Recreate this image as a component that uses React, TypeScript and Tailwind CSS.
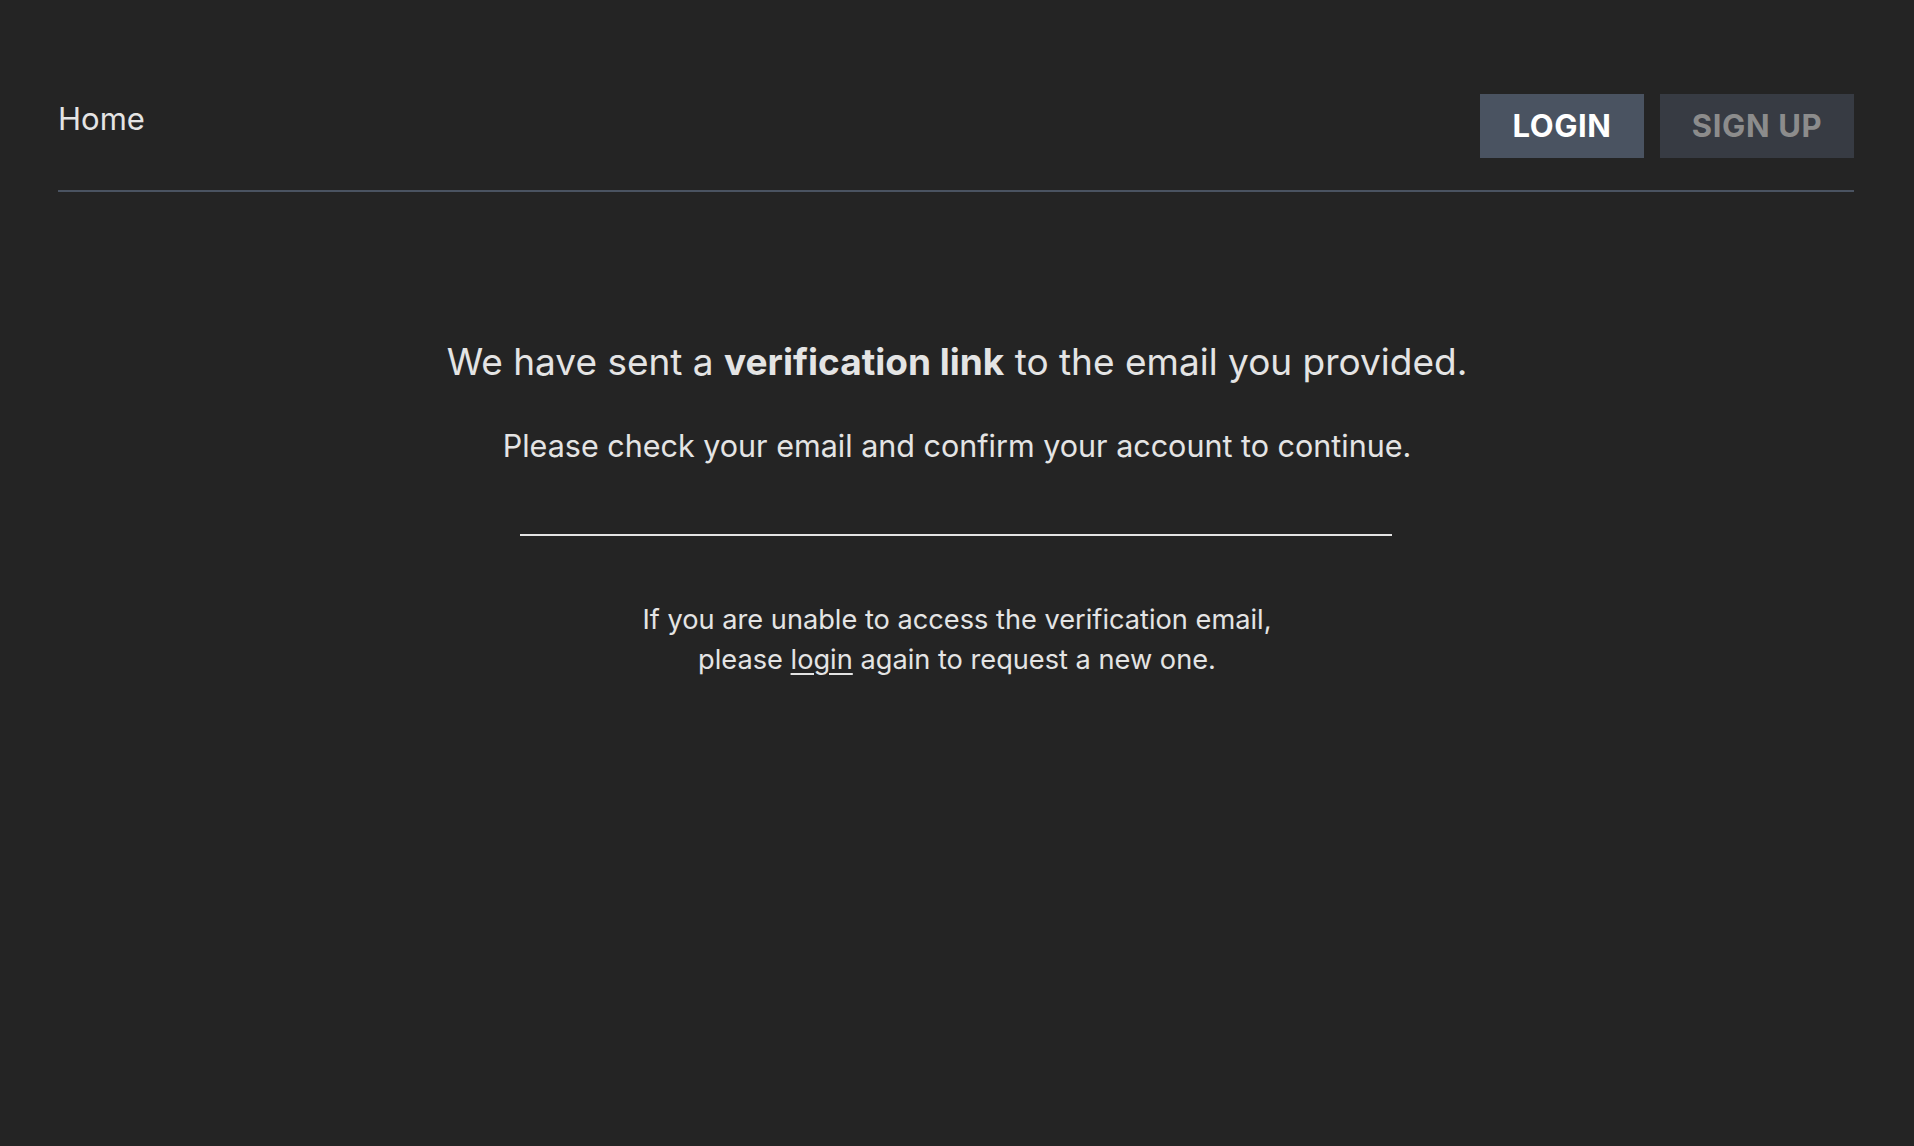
export default function App() {
  return (
    <div className="min-h-screen bg-[#242424] font-['Inter',sans-serif] text-[#e4e4e4]">
      <div className="pl-[58px] pr-[60px] pt-[94px]">
        <header className="flex items-start justify-between border-b-2 border-[#4a5361] pb-[32px]">
          <a href="#" className="mt-[7px] text-[31px] leading-[36px] text-[#e4e4e4]">
            Home
          </a>
          <div className="flex gap-4">
            <button className="h-16 w-[164px] bg-[#4a5361] text-[31px] font-bold tracking-[0.02em] text-white">
              LOGIN
            </button>
            <button className="h-16 w-[194px] bg-[#373b43] text-[31px] font-bold tracking-[0.02em] text-[#8c8c8c]">
              SIGN UP
            </button>
          </div>
        </header>
      </div>

      <main className="flex flex-col items-center pt-[148px] text-center">
        <h1 className="text-[37px] leading-[44px]">
          We have sent a <strong className="font-bold">verification link</strong> to the email you
          provided.
        </h1>
        <p className="mt-[44px] text-[30.5px] leading-[36px]">
          Please check your email and confirm your account to continue.
        </p>
        <div className="mt-[70px] ml-[-2px] h-[2px] w-[872px] bg-[#e4e4e4]" />
        <p className="mt-[64px] text-[27.2px] leading-[40px]">
          If you are unable to access the verification email,
          <br />
          please{" "}
          <a href="#" className="underline underline-offset-4">
            login
          </a>{" "}
          again to request a new one.
        </p>
      </main>
    </div>
  );
}
